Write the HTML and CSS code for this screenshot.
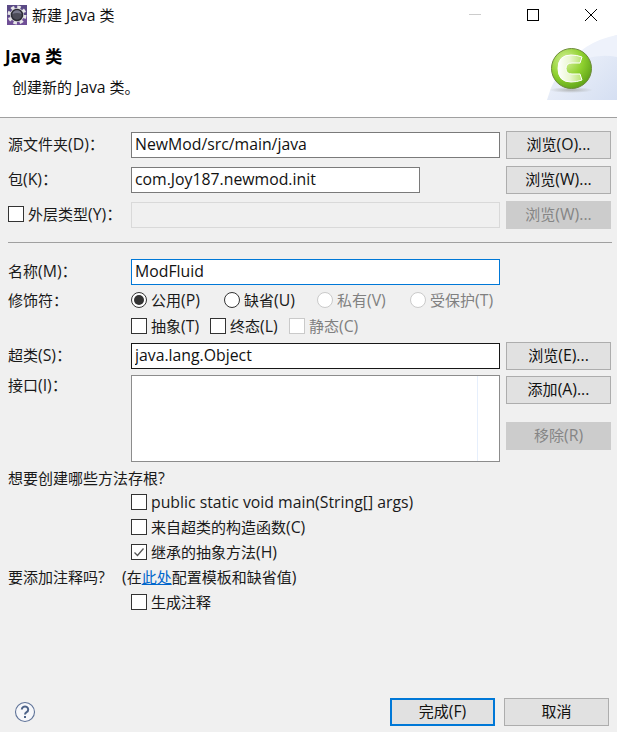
FILE: index.html
```html
<!DOCTYPE html>
<html lang="zh-CN">
<head>
    <meta charset="UTF-8">
    <title>新建 Java 类</title>
    <link rel="stylesheet" href="styles.css">
</head>
<body>
    <div class="dialog">
        <div class="top">
            <div class="titlebar">
                <svg class="app-icon" width="20" height="20" viewBox="0 0 20 20">
                    <rect width="20" height="20" fill="#5b4a86"/>
                    <rect y="12" width="20" height="8" fill="#6f4f96"/>
                    <circle cx="10" cy="10" r="8" fill="none" stroke="#e8e8e8" stroke-width="3" stroke-dasharray="3.500 2.780"/>
                    <circle cx="10" cy="10" r="7" fill="#d8d8dc"/>
                    <circle cx="10" cy="10" r="5.500" fill="#4c4c58" stroke="#2c2c34" stroke-width="1.500"/>
                    <path d="M5.500 9a4.600 4.600 0 0 1 9 0a6 3 0 0 0-9 0z" fill="#77778a"/>
                </svg>
                <span class="title">新建 <span class="lat">Java</span> 类</span>
                <div class="winctl">
                    <svg width="12" height="12" viewBox="0 0 12 12"><path d="M0 5.500h12" stroke="#ccc"/></svg>
                    <svg width="12" height="12" viewBox="0 0 12 12"><rect x=".5" y=".5" width="11" height="11" fill="none" stroke="#000"/></svg>
                    <svg width="12" height="12" viewBox="0 0 12 12"><path d="M0 0l12 12M12 0L0 12" stroke="#000"/></svg>
                </div>
            </div>
            <div class="banner">
                <div class="banner-text">
                    <h1>Java 类</h1>
                    <p>创建新的 <span class="lat">Java</span> 类。</p>
                </div>
                <svg class="banner-art" width="70" height="70" viewBox="0 0 70 70">
                    <defs>
                        <linearGradient id="wash" x1="0" y1="0" x2="1" y2="1">
                            <stop offset="0" stop-color="#f6f8fd"/>
                            <stop offset="1" stop-color="#d5dff2"/>
                        </linearGradient>
                        <radialGradient id="ball" cx=".35" cy=".3" r=".85">
                            <stop offset="0" stop-color="#d6f09a"/>
                            <stop offset=".5" stop-color="#8fd12f"/>
                            <stop offset="1" stop-color="#4f9410"/>
                        </radialGradient>
                        <linearGradient id="letter" x1="0" y1="0" x2="1" y2="0">
                            <stop offset="0" stop-color="#ffffff"/>
                            <stop offset=".5" stop-color="#eaf7cf"/>
                            <stop offset="1" stop-color="#b6e36e"/>
                        </linearGradient>
                        <radialGradient id="shade">
                            <stop offset="0" stop-color="#8a8a80" stop-opacity=".55"/>
                            <stop offset="1" stop-color="#8a8a80" stop-opacity="0"/>
                        </radialGradient>
                    </defs>
                    <path d="M0 70Q12 22 70 5V70z" fill="url(#wash)"/>
                    <path d="M20 37Q45 22 70 27V5Q35 12 20 37z" fill="#eef2fb"/>
                    <ellipse cx="24" cy="60" rx="22" ry="3" fill="url(#shade)"/>
                    <circle cx="24.500" cy="38.500" r="20" fill="url(#ball)" stroke="#6d8a3c"/>
                    <path d="M35 27Q30 25 24 25Q11 25 11 38.500Q11 52 24 52Q30 52 35 50L33 44L25 44Q19 44 19 38.500Q19 33 25 33L33 33z" fill="url(#letter)" stroke="#fff"/>
                </svg>
            </div>
        </div>

        <form class="form">
            <div class="row first">
                <label>源文件夹<span class="lat">(D)：</span></label>
                <input class="field" type="text" value="NewMod/src/main/java" readonly>
                <button type="button" class="btn">浏览<span class="lat">(O)...</span></button>
            </div>
            <div class="row">
                <label>包<span class="lat">(K)：</span></label>
                <input class="field short" type="text" value="com.Joy187.newmod.init" readonly>
                <button type="button" class="btn">浏览<span class="lat">(W)...</span></button>
            </div>
            <div class="row">
                <label class="check-label"><span class="box"></span>外层类型<span class="lat">(Y)：</span></label>
                <input class="field off" type="text" disabled>
                <button type="button" class="btn btn-off">浏览<span class="lat">(W)...</span></button>
            </div>

            <div class="sep"></div>

            <div class="row">
                <label>名称<span class="lat">(M)：</span></label>
                <input class="field focus" type="text" value="ModFluid" readonly>
            </div>
            <div class="line mods">
                <label>修饰符：</label>
                <span class="opt wide"><span class="radio on"></span>公用<span class="lat">(P)</span></span>
                <span class="opt wide"><span class="radio"></span>缺省<span class="lat">(U)</span></span>
                <span class="opt wide muted"><span class="radio off"></span>私有<span class="lat">(V)</span></span>
                <span class="opt wide muted"><span class="radio off"></span>受保护<span class="lat">(T)</span></span>
            </div>
            <div class="line mods second">
                <label></label>
                <span class="opt"><span class="box"></span>抽象<span class="lat">(T)</span></span>
                <span class="opt"><span class="box"></span>终态<span class="lat">(L)</span></span>
                <span class="opt muted"><span class="box off"></span>静态<span class="lat">(C)</span></span>
            </div>
            <div class="row super">
                <label>超类<span class="lat">(S)：</span></label>
                <input class="field dark" type="text" value="java.lang.Object" readonly>
                <button type="button" class="btn">浏览<span class="lat">(E)...</span></button>
            </div>
            <div class="row ifaces">
                <label>接口<span class="lat">(I)：</span></label>
                <div class="list"></div>
                <div class="list-btns">
                    <button type="button" class="btn">添加<span class="lat">(A)...</span></button>
                    <button type="button" class="btn btn-off">移除<span class="lat">(R)</span></button>
                </div>
            </div>

            <div class="line stub-head">想要创建哪些方法存根<span class="lat">?</span></div>
            <div class="line indent"><span class="opt"><span class="box"></span><span class="lat">public static void main(String[] args)</span></span></div>
            <div class="line indent"><span class="opt"><span class="box"></span>来自超类的构造函数<span class="lat">(C)</span></span></div>
            <div class="line indent">
                <span class="opt">
                    <span class="box"><svg width="14" height="14" viewBox="0 0 14 14"><path d="M2.500 7.500l3 3 6-7" fill="none" stroke="#555" stroke-width="1.300"/></svg></span>继承的抽象方法<span class="lat">(H)</span>
                </span>
            </div>
            <div class="line comment">
                <span class="comment-q">要添加注释吗<span class="lat">?</span></span>
                <span><span class="lat">(</span>在<a href="#">此处</a>配置模板和缺省值<span class="lat">)</span></span>
            </div>
            <div class="line indent"><span class="opt"><span class="box"></span>生成注释</span></div>
        </form>

        <div class="footer">
            <svg width="22" height="22" viewBox="0 0 22 22">
                <circle cx="11" cy="11" r="9.500" fill="#f6f7fa" stroke="#5f7398" stroke-width="1.100"/>
                <path d="M7.800 8.500a3.200 3 0 1 1 4.800 2.600c-1.100.7-1.600 1.200-1.600 2.400" fill="none" stroke="#4c6288" stroke-width="2"/>
                <rect x="10" y="15" width="2" height="2" fill="#4c6288"/>
            </svg>
            <div class="footer-btns">
                <button type="button" class="btn btn-main">完成<span class="lat">(F)</span></button>
                <button type="button" class="btn">取消</button>
            </div>
        </div>
    </div>
</body>
</html>
```

FILE: styles.css
```css
* {
    box-sizing: border-box;
}

html, body {
    margin: 0;
    height: 100%;
}

body {
    font-family: "Open Sans", "Noto Sans CJK SC", sans-serif;
    font-size: 15px;
    line-height: 20px;
    color: #1a1a1a;
    background: #f0f0f0;
}

/* latin text runs a bit wider than the cjk next to it */
.lat {
    font-size: 15.800px;
}

.dialog {
    height: 732px;
    display: flex;
    flex-direction: column;
    overflow: hidden;
}

/* white top part */
.top {
    background: #fff;
    height: 118px;
    border-bottom: 1px solid #a0a0a0;
}

.titlebar {
    height: 30px;
    display: flex;
    align-items: center;
    padding-left: 7px;
}

.app-icon {
    margin-right: 5px;
}

.title {
    color: #111;
}

.winctl {
    margin-left: auto;
    display: flex;
    gap: 46px;
    padding-right: 20px;
}

.banner {
    height: 87px;
    display: flex;
    justify-content: space-between;
}

.banner-text {
    padding-left: 5px;
}

.banner h1 {
    margin: 15px 0 0;
    font-size: 17px;
    line-height: 24px;
    font-weight: bold;
    color: #000;
}

.banner p {
    margin: 6px 0 0 7px;
    line-height: 24px;
    color: #111;
}

/* form rows */
.form {
    padding: 13px 6px 0 8px;
}

.row {
    display: grid;
    grid-template-columns: 123px 369px 105px;
    align-items: center;
    height: 26px;
    margin-bottom: 9px;
}

.row label {
    white-space: nowrap;
    padding-bottom: 2px;
}

.row .btn {
    margin-left: 6px;
    width: 105px;
    height: 28px;
}

.check-label {
    display: flex;
    align-items: center;
}

.field {
    height: 26px;
    width: 369px;
    padding: 0 3px 2px;
    font: inherit;
    font-size: 15.800px;
    color: #111;
    background: #fff;
    border: 1px solid #7a7a7a;
    outline: none;
}

.field.short {
    width: 289px;
}

.field.off {
    background: #f0f0f0;
    border-color: #d9d9d9;
}

.field.focus {
    border-color: #0078d7;
}

.field.dark {
    border-color: #171717;
}

.sep {
    height: 1px;
    background: #a0a0a0;
    margin: 15px -1px 16px 0;
}

.line {
    display: flex;
    align-items: center;
    height: 25px;
    white-space: nowrap;
}

.mods label {
    width: 123px;
}

.mods {
    margin-top: -6px;
    height: 24px;
}

.mods.second {
    margin-top: 2px;
}

.row.super {
    margin-top: 4px;
    margin-bottom: 7px;
}

.opt {
    display: inline-flex;
    align-items: center;
    width: 79px;
}

.opt.wide {
    width: 93px;
}

.muted {
    color: #808080;
}

.box, .radio {
    flex: none;
    width: 16px;
    height: 16px;
    margin-right: 4px;
    background: #fff;
    border: 1px solid #333;
    display: inline-flex;
    align-items: center;
    justify-content: center;
}

.radio {
    border-radius: 50%;
}

.radio.on::after {
    content: "";
    width: 10px;
    height: 10px;
    border-radius: 50%;
    background: #333;
}

.box.off, .radio.off {
    border-color: #cacaca;
}

.row.ifaces {
    height: 87px;
    margin-bottom: 4px;
    align-items: start;
}

.ifaces label {
    line-height: 20px;
}

.list {
    height: 87px;
    background: linear-gradient(to right, #fff 345px, #e6effc 345px, #e6effc 346px, #fff 346px);
    border: 1px solid #8c8c8c;
}

.list-btns {
    display: flex;
    flex-direction: column;
    gap: 18px;
    padding-top: 1px;
}

.stub-head {
    height: 24px;
}

.indent, .comment {
    padding-bottom: 1px;
}

.indent {
    padding-left: 123px;
}

.indent .opt {
    width: auto;
}

.comment-q {
    width: 114px;
}

a {
    color: #0066cc;
}

/* buttons */
.btn {
    font: inherit;
    color: #111;
    height: 28px;
    padding: 0 0 2px;
    background: #e1e1e1;
    border: 1.500px solid #adadad;
}

.btn-off {
    background: #cccccc;
    border-color: #cccccc;
    color: #858585;
}

.btn-main {
    border: 2px solid #0078d7;
}

.footer {
    margin-top: auto;
    padding: 0 8px 6px 14px;
    display: flex;
    align-items: center;
    justify-content: space-between;
}

.footer-btns {
    display: flex;
    gap: 9px;
}

.footer-btns .btn {
    width: 105px;
}
```
